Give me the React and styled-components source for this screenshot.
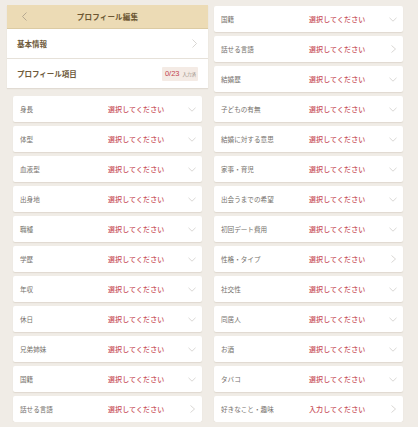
import React from 'react'
import styled, { createGlobalStyle } from 'styled-components'

const Global = createGlobalStyle`
  html, body {
    margin: 0;
    padding: 0;
    background: #f0ece6;
    font-family: "Noto Sans CJK JP", "Noto Sans", sans-serif;
  }
`

const Page = styled.div`
  display: grid;
  grid-template-columns: 201px 201px;
  padding: 5px 0 0 7px;
  align-items: start;
`

const Column = styled.div`
  display: flex;
  flex-direction: column;
`

const Panel = styled.div`
  background: #fff;
  box-shadow: 0 1px 1px rgba(120, 100, 70, 0.12);
`

const Header = styled.div`
  position: relative;
  height: 23px;
  background: #ecdbb5;
  display: flex;
  align-items: center;
  justify-content: center;
  border-bottom: 1px solid #dccba3;
`

const BackIcon = styled.svg`
  position: absolute;
  left: 14px;
  top: 7px;
`

const Title = styled.span`
  font-size: 7.5px;
  font-weight: 700;
  color: #6b5632;
  letter-spacing: 0.2px;
`

const Section = styled.div`
  height: 29px;
  padding: 0 10px 0 10px;
  display: flex;
  align-items: center;
  justify-content: space-between;
  border-top: ${(p) => (p.$divided ? '1px solid #e6e1d9' : 'none')};
`

const SectionLabel = styled.span`
  font-size: 7.5px;
  font-weight: 700;
  color: #6e5a3a;
`

const Badge = styled.span`
  display: flex;
  align-items: center;
  gap: 3px;
  height: 14px;
  padding: 0 2px 0 3px;
  background: #f4ebe5;
  border-radius: 1px;
`

const BadgeCount = styled.span`
  font-size: 7.5px;
  color: #c2444f;
  font-family: "Liberation Sans", "Noto Sans CJK JP", sans-serif;
`

const BadgeNote = styled.span`
  font-size: 4.5px;
  color: #9a9088;
`

const List = styled.div`
  display: flex;
  flex-direction: column;
  gap: 4px;
  padding: ${(p) => (p.$top ? `${p.$top}px` : '0')} 6px 0 6px;
`

const Card = styled.div`
  height: 26px;
  background: #fff;
  border-radius: 2px;
  box-shadow: 0 1px 1px rgba(120, 100, 70, 0.14);
  display: grid;
  grid-template-columns: 88px 1fr auto;
  align-items: center;
  padding: 0 6px 0 7px;
`

const Label = styled.span`
  font-size: 6.6px;
  color: #75716c;
  white-space: nowrap;
`

const Value = styled.span`
  font-size: 7px;
  font-weight: 500;
  color: #c8505a;
  letter-spacing: 0.1px;
`

const Chevron = ({ dir }) =>
  dir === 'right' ? (
    <svg width="7" height="8" viewBox="0 0 7 8">
      <path d="M1.5 0.5 L5.5 4 L1.5 7.5" fill="none" stroke="#c9c6c2" strokeWidth="0.7" />
    </svg>
  ) : (
    <svg width="8" height="5" viewBox="0 0 8 5">
      <path d="M0.5 0.8 L4 4.2 L7.5 0.8" fill="none" stroke="#c9c6c2" strokeWidth="0.7" />
    </svg>
  )

const leftItems = [
  ['身長'],
  ['体型'],
  ['血液型'],
  ['出身地'],
  ['職種'],
  ['学歴'],
  ['年収'],
  ['休日'],
  ['兄弟姉妹'],
  ['国籍'],
  ['話せる言語', 'right'],
]

const rightItems = [
  ['国籍'],
  ['話せる言語', 'right'],
  ['結婚歴'],
  ['子どもの有無'],
  ['結婚に対する意思'],
  ['家事・育児'],
  ['出会うまでの希望'],
  ['初回デート費用'],
  ['性格・タイプ', 'right'],
  ['社交性'],
  ['同居人'],
  ['お酒'],
  ['タバコ'],
  ['好きなこと・趣味', 'right', '入力してください'],
]

const Row = ({ label, dir, value }) => (
  <Card>
    <Label>{label}</Label>
    <Value>{value || '選択してください'}</Value>
    <Chevron dir={dir} />
  </Card>
)

const App = () => (
  <>
    <Global />
    <Page>
      <Column>
        <Panel>
          <Header>
            <BackIcon width="7" height="9" viewBox="0 0 7 9">
              <path d="M5.5 0.5 L1.5 4.5 L5.5 8.5" fill="none" stroke="#a89c88" strokeWidth="0.8" />
            </BackIcon>
            <Title>プロフィール編集</Title>
          </Header>
          <Section>
            <SectionLabel>基本情報</SectionLabel>
            <svg width="7" height="9" viewBox="0 0 7 9">
              <path d="M1.5 0.5 L5.5 4.5 L1.5 8.5" fill="none" stroke="#c9c6c2" strokeWidth="0.7" />
            </svg>
          </Section>
          <Section $divided>
            <SectionLabel>プロフィール項目</SectionLabel>
            <Badge>
              <BadgeCount>0/23</BadgeCount>
              <BadgeNote>入力済</BadgeNote>
            </Badge>
          </Section>
        </Panel>
        <List $top={8}>
          {leftItems.map(([label, dir, value], i) => (
            <Row key={i} label={label} dir={dir} value={value} />
          ))}
        </List>
      </Column>
      <Column>
        <List $top={1}>
          {rightItems.map(([label, dir, value], i) => (
            <Row key={i} label={label} dir={dir} value={value} />
          ))}
        </List>
      </Column>
    </Page>
  </>
)

export default App
